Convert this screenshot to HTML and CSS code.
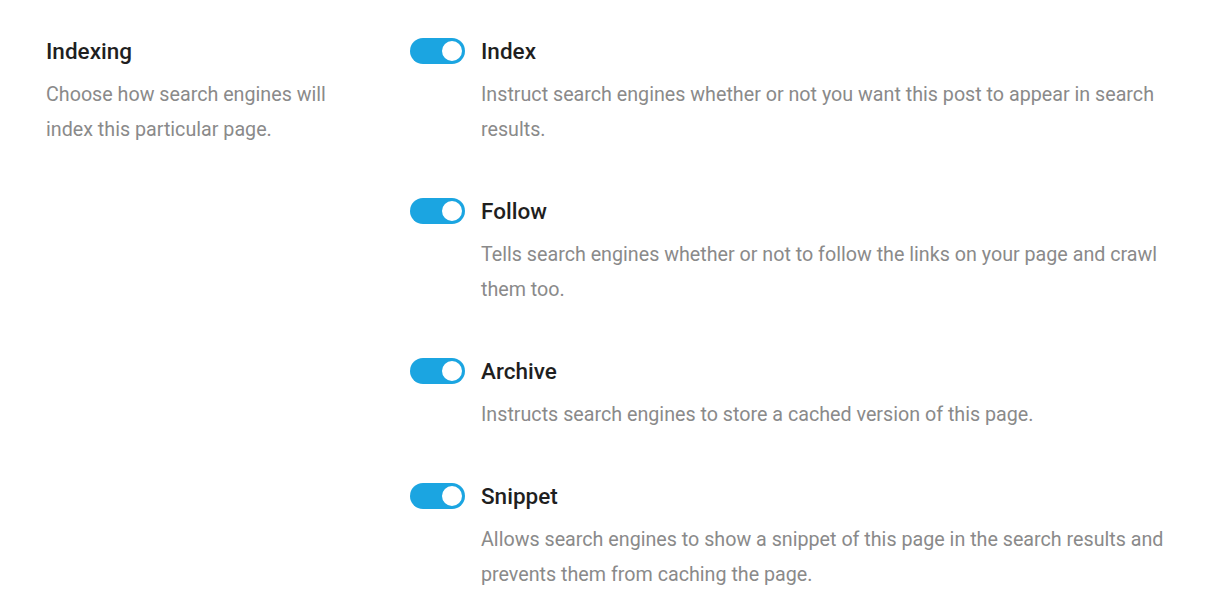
FILE: index.html
```html
<!DOCTYPE html>
<html lang="en">
<head>
<meta charset="utf-8">
<title>Indexing</title>
<link rel="stylesheet" href="styles.css">
</head>
<body>
<section class="settings">
  <div class="intro">
    <h2 class="intro-title">Indexing</h2>
    <p class="desc">Choose how search engines will index this particular page.</p>
  </div>
  <div class="options">
    <div class="option">
      <span class="toggle on"><span class="knob"></span></span>
      <div class="option-body">
        <h3 class="option-title">Index</h3>
        <p class="desc">Instruct search engines whether or not you want this post to appear in search results.</p>
      </div>
    </div>
    <div class="option">
      <span class="toggle on"><span class="knob"></span></span>
      <div class="option-body">
        <h3 class="option-title">Follow</h3>
        <p class="desc">Tells search engines whether or not to follow the links on your page and crawl them too.</p>
      </div>
    </div>
    <div class="option">
      <span class="toggle on"><span class="knob"></span></span>
      <div class="option-body">
        <h3 class="option-title">Archive</h3>
        <p class="desc">Instructs search engines to store a cached version of this page.</p>
      </div>
    </div>
    <div class="option">
      <span class="toggle on"><span class="knob"></span></span>
      <div class="option-body">
        <h3 class="option-title">Snippet</h3>
        <p class="desc">Allows search engines to show a snippet of this page in the search results and prevents them from caching the page.</p>
      </div>
    </div>
  </div>
</section>
</body>
</html>
```

FILE: styles.css
```css
* { box-sizing: border-box; }
html, body { margin: 0; padding: 0; background: #fff; }
body {
  font-family: Roboto, "Liberation Sans", Arial, sans-serif;
  color: #222;
}
.settings {
  display: grid;
  grid-template-columns: 364px 1fr;
  padding: 38px 46px 0 46px;
}
.intro-title {
  margin: 0;
  font-size: 22.5px;
  font-weight: 500;
  line-height: 26px;
  color: #1f1f1f;
}
.desc {
  margin: 0;
  font-size: 19.7px;
  line-height: 35px;
  color: #8a8a8a;
}
.intro .desc { margin-top: 13px; width: 300px; }
.options {
  display: flex;
  flex-direction: column;
  gap: 51px;
}
.option {
  display: flex;
  align-items: flex-start;
  gap: 16px;
}
.toggle {
  flex: none;
  display: flex;
  align-items: center;
  justify-content: flex-end;
  width: 55px;
  height: 26px;
  border-radius: 13px;
  background: #1ba5e1;
  padding: 1px;
}
.knob {
  width: 24px;
  height: 24px;
  border-radius: 50%;
  background: #fff;
  border: 2px solid #1ba5e1;
}
.option-body { flex: 1; }
.option-title {
  margin: 0;
  font-size: 22.5px;
  font-weight: 500;
  line-height: 26px;
  color: #1f1f1f;
}
.option-body .desc { margin-top: 13px; }
```
